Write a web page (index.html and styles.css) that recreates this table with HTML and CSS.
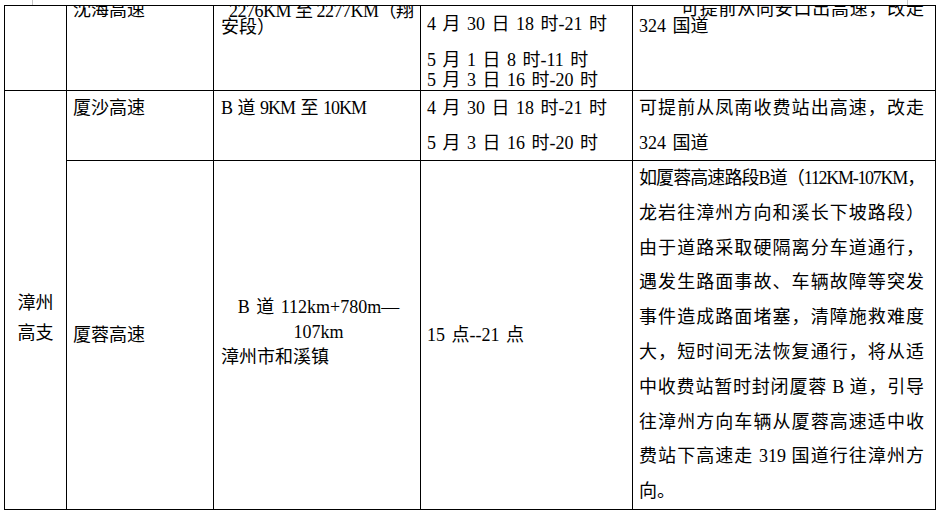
FILE: index.html
```html
<!DOCTYPE html>
<html lang="zh-CN">
<head>
<meta charset="utf-8">
<title>交通管制路段</title>
<link rel="stylesheet" href="styles.css">
</head>
<body>
<div class="page">
  <span class="mark mark-left"></span>
  <span class="mark mark-right"></span>
  <table class="sheet">
    <colgroup>
      <col class="col-area">
      <col class="col-road">
      <col class="col-section">
      <col class="col-time">
      <col class="col-note">
    </colgroup>
    <tr>
      <td><div class="clip"></div></td>
      <td><div class="clip pad-road"><div class="ln h20 up6 nw">沈海高速</div></div></td>
      <td><div class="clip pad-section"><div class="ln h16 up3 nw indent-sp tight">2276KM 至 2277KM（翔</div><div class="ln h16 nw">安段）</div></div></td>
      <td><div class="clip pad-time"><div class="ln h20 down8 nw ws">4 月 30 日 18 时-21 时</div><div class="ln h20 gap16 nw ws">5 月 1 日 8 时-11 时</div><div class="ln h20 nw ws">5 月 3 日 16 时-20 时</div></div></td>
      <td><div class="clip pad-note"><div class="ln h17 up5 just indent-2">可提前从同安口出高速，改走</div><div class="ln h17 nw ws">324 国道</div></div></td>
    </tr>
    <tr>
      <td rowspan="2" class="mid"><div class="area">漳州<br>高支</div></td>
      <td><div class="row2 pad-road"><div class="ln h35 nw">厦沙高速</div></div></td>
      <td><div class="row2 pad-section"><div class="ln h35 nw ws narrow">B 道 9KM 至 10KM</div></div></td>
      <td><div class="row2 pad-time"><div class="ln h35 nw ws">4 月 30 日 18 时-21 时</div><div class="ln h35 nw ws">5 月 3 日 16 时-20 时</div></div></td>
      <td><div class="row2 pad-note"><div class="ln h35 just">可提前从凤南收费站出高速，改走</div><div class="ln h35 nw ws">324 国道</div></div></td>
    </tr>
    <tr>
      <td class="mid"><div class="pad-road"><div class="ln h35 nw">厦蓉高速</div></div></td>
      <td class="mid"><div class="pad-section lift"><div class="ln h25 nw center ws">B 道 112km+780m—</div><div class="ln h25 nw center">107km</div><div class="ln h25 nw">漳州市和溪镇</div></div></td>
      <td class="mid"><div class="pad-time"><div class="ln h35 nw ws">15 点--21 点</div></div></td>
      <td><div class="row3 pad-note">
        <div class="ln h348 just squeeze">如厦蓉高速路段B道（112KM-107KM，</div>
        <div class="ln h348 just">龙岩往漳州方向和溪长下坡路段）</div>
        <div class="ln h348 just">由于道路采取硬隔离分车道通行，</div>
        <div class="ln h348 just">遇发生路面事故、车辆故障等突发</div>
        <div class="ln h348 just">事件造成路面堵塞，清障施救难度</div>
        <div class="ln h348 just">大，短时间无法恢复通行，将从适</div>
        <div class="ln h348 just">中收费站暂时封闭厦蓉 B 道，引导</div>
        <div class="ln h348 just">往漳州方向车辆从厦蓉高速适中收</div>
        <div class="ln h348 just">费站下高速走 319 国道行往漳州方</div>
        <div class="ln h348 nw">向。</div>
      </div></td>
    </tr>
  </table>
</div>
</body>
</html>
```
FILE: styles.css
```css
* { box-sizing: border-box; }
html, body { margin: 0; padding: 0; background: #ffffff; }
body {
  font-family: "Liberation Serif", "Noto Sans CJK SC", serif;
  font-size: 18px;
  color: #000000;
}
.page {
  position: relative;
  width: 948px;
  height: 516px;
  padding: 5px 0 0 4px;
  overflow: hidden;
}
.mark {
  position: absolute;
  top: 0;
  width: 1px;
  height: 5px;
  background: #c4c4c4;
}
.mark-left { left: 32px; }
.mark-right { left: 907px; }

.sheet {
  border-collapse: collapse;
  table-layout: fixed;
  width: 932px;
}
.sheet td {
  border: 1px solid #000000;
  padding: 0;
  vertical-align: top;
}
.sheet td.mid { vertical-align: middle; }
.col-area { width: 62px; }
.col-road { width: 147px; }
.col-section { width: 207px; }
.col-time { width: 212px; }
.col-note { width: 303px; }

.clip { height: 84px; overflow: hidden; }
.row2 { height: 69px; }
.row3 { height: 348px; padding-top: 2px; }

.pad-road { padding-left: 6px; }
.pad-section { padding: 0 4px 0 7px; }
.pad-time { padding-left: 6px; }
.pad-note { padding: 0 11px 0 6px; }

.area {
  text-align: center;
  line-height: 30px;
  padding-top: 36px;
}

.ln { display: block; }
.nw { white-space: nowrap; }
.ws { word-spacing: 2px; }
.narrow { letter-spacing: -1px; }
.h16 { height: 16px; line-height: 16px; }
.h17 { height: 17px; line-height: 17px; }
.h20 { height: 20px; line-height: 20px; }
.h25 { height: 25px; line-height: 25px; }
.h35 { height: 35px; line-height: 35px; }
.h348 { height: 34.8px; line-height: 34.8px; }
.up3 { margin-top: -3px; }
.up5 { margin-top: -5px; }
.up6 { margin-top: -6px; }
.down8 { margin-top: 8px; }
.gap16 { margin-top: 16px; }
.lift { padding-bottom: 6px; }
.center { text-align: center; }
.indent-sp { text-indent: 8px; }
.indent-2 { text-indent: 42px; }
.tight { letter-spacing: -0.5px; }
.squeeze { letter-spacing: -1.3px; }
.just {
  text-align: justify;
  text-align-last: justify;
}
```
